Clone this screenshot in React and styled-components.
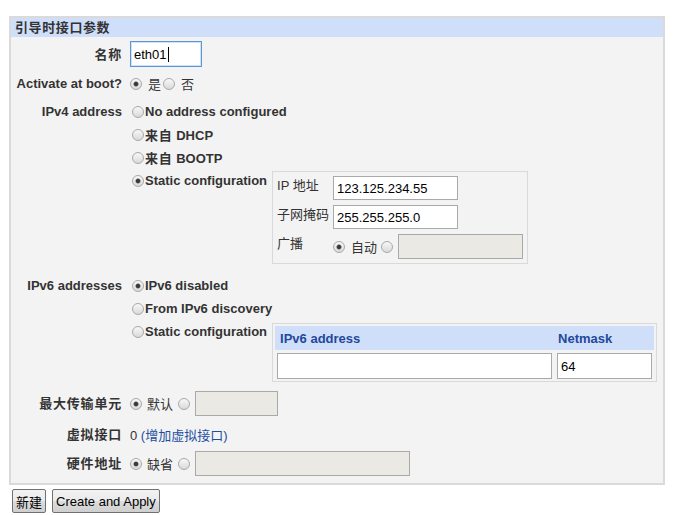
import React from 'react'
import styled, { createGlobalStyle } from 'styled-components'

const Global = createGlobalStyle`
  body {
    margin: 0;
    background: #fff;
    font-family: "Liberation Sans", Arial, "Noto Sans CJK SC", sans-serif;
    font-size: 13px;
    color: #333;
  }
  * { box-sizing: border-box; }
`

const Page = styled.div`
  padding: 16px 0 0 9px;
`

const Box = styled.div`
  width: 656px;
  border: 2px solid #dadada;
  background: #f3f3f3;
`

const Title = styled.div`
  height: 19px;
  line-height: 19px;
  padding-left: 4px;
  background: #cfdffa;
  font-weight: bold;
  letter-spacing: 0.6px;
  color: #333;
`

const Form = styled.div`
  display: grid;
  grid-template-columns: 111px 1fr;
  column-gap: 8px;
  row-gap: 5px;
  padding: 4px 0 7px 0;
`

const Label = styled.div`
  text-align: right;
  font-weight: bold;
  line-height: 23px;
  align-self: ${p => (p.$top ? 'start' : 'center')};
  letter-spacing: ${p => (p.$zh ? '0.8px' : '0')};
  white-space: nowrap;
`

const Value = styled.div`
  display: flex;
  flex-direction: ${p => (p.$column ? 'column' : 'row')};
  align-items: ${p => (p.$column ? 'flex-start' : 'center')};
  min-height: ${p => p.$h || 23}px;
`

const Line = styled.div`
  display: flex;
  align-items: center;
  height: 23px;
`

const Option = styled.div`
  display: flex;
  align-items: flex-start;
`

const Radio = styled.span`
  display: inline-block;
  flex: none;
  width: 12px;
  height: 12px;
  border-radius: 50%;
  border: 1px solid #a9a9a9;
  margin: 0 ${p => p.$gap ?? 1}px 0 ${p => p.$left ?? 0}px;
  background: ${p =>
    p.$on
      ? 'radial-gradient(circle, #3a3a3a 0 1.8px, #9a9a9a 2.4px, transparent 3px), linear-gradient(#f8f8f8, #d9d9d9)'
      : 'linear-gradient(#f8f8f8, #d9d9d9)'};
`

const OptText = styled.span`
  font-weight: bold;
  white-space: nowrap;
`

const Zh = styled.span`
  letter-spacing: 0.8px;
`

const Plain = styled.span`
  margin-right: ${p => p.$gap ?? 4}px;
  white-space: nowrap;
`

const NameField = styled.div`
  display: flex;
  align-items: center;
  width: 72px;
  height: 26px;
  padding-left: 3px;
  background: #fff;
  border: 1px solid #5a96d8;
  box-shadow: inset 0 0 0 1px #cfe2f7;
  color: #000;
`

const Caret = styled.span`
  width: 1px;
  height: 15px;
  background: #000;
  margin-left: 1px;
`

const Field = styled.input`
  width: ${p => p.$w}px;
  height: ${p => p.$h || 24}px;
  margin: 0;
  padding: 0 3px;
  border: 1px solid #a9a9a9;
  background: ${p => (p.disabled ? '#ebe9e3' : '#fff')};
  font: 13px "Liberation Sans", Arial, sans-serif;
  color: #000;
  outline: none;
`

const SubBox = styled.div`
  display: grid;
  grid-template-columns: 56px auto;
  row-gap: 5px;
  margin: 2px 0 5px 5px;
  padding: 4px;
  border: 1px solid #d9d9d9;
`

const SubLabel = styled.div`
  line-height: 18px;
  padding-top: 1px;
  white-space: nowrap;
`

const SubValue = styled.div`
  display: flex;
  align-items: center;
`

const V6Box = styled.div`
  margin: 3px 0 2px 5px;
  padding: 2px;
  border: 1px solid #d9d9d9;
`

const V6Head = styled.div`
  display: grid;
  grid-template-columns: 280px 98px;
  height: 24px;
  align-items: center;
  background: #cfdffa;
  color: #24489a;
  font-weight: bold;
`

const HeadCell = styled.div`
  padding-left: ${p => p.$pl}px;
`

const V6Row = styled.div`
  display: flex;
  gap: 5px;
  padding: 3px 2px 0;
`

const Link = styled.a`
  color: #1d4f9f;
  text-decoration: none;
`

const Buttons = styled.div`
  display: flex;
  gap: 6px;
  margin: 4px 0 0 3px;
`

const Button = styled.button`
  height: 24px;
  padding: 0 3px;
  border: 1px solid #707070;
  border-radius: 2px;
  background: linear-gradient(#f2f2f2, #ebebeb 50%, #dddddd 51%, #cfcfcf);
  font: 13px "Liberation Sans", Arial, "Noto Sans CJK SC", sans-serif;
  color: #000;
`

export default function App() {
  return (
    <Page>
      <Global />
      <Box>
        <Title>引导时接口参数</Title>
        <Form>
          <Label $zh>名称</Label>
          <Value $h={26}>
            <NameField>eth01<Caret /></NameField>
          </Value>

          <Label $top>Activate at boot?</Label>
          <Value>
            <Radio $on $gap={6} />
            <Plain $gap={2}>是</Plain>
            <Radio $gap={6} />
            <Plain>否</Plain>
          </Value>

          <Label $top>IPv4 address</Label>
          <Value $column>
            <Line><Radio $left={2} /><OptText>No address configured</OptText></Line>
            <Line><Radio $left={2} /><OptText><Zh>来自</Zh> DHCP</OptText></Line>
            <Line><Radio $left={2} /><OptText><Zh>来自</Zh> BOOTP</OptText></Line>
            <Option>
              <Line><Radio $left={2} $on /><OptText>Static configuration</OptText></Line>
              <SubBox>
                <SubLabel>IP 地址</SubLabel>
                <SubValue><Field $w={125} defaultValue="123.125.234.55" /></SubValue>
                <SubLabel>子网掩码</SubLabel>
                <SubValue><Field $w={125} defaultValue="255.255.255.0" /></SubValue>
                <SubLabel>广播</SubLabel>
                <SubValue>
                  <Radio $on $gap={6} />
                  <Plain>自动</Plain>
                  <Radio $gap={5} />
                  <Field $w={125} $h={25} disabled />
                </SubValue>
              </SubBox>
            </Option>
          </Value>

          <Label $top>IPv6 addresses</Label>
          <Value $column>
            <Line><Radio $left={2} $on /><OptText>IPv6 disabled</OptText></Line>
            <Line><Radio $left={2} /><OptText>From IPv6 discovery</OptText></Line>
            <Option>
              <Line><Radio $left={2} /><OptText>Static configuration</OptText></Line>
              <V6Box>
                <V6Head>
                  <HeadCell $pl={5}>IPv6 address</HeadCell>
                  <HeadCell $pl={3}>Netmask</HeadCell>
                </V6Head>
                <V6Row>
                  <Field $w={275} $h={26} />
                  <Field $w={95} $h={26} defaultValue="64" />
                </V6Row>
              </V6Box>
            </Option>
          </Value>

          <Label $zh>最大传输单元</Label>
          <Value $h={29}>
            <Radio $on $gap={5} />
            <Plain $gap={5}>默认</Plain>
            <Radio $gap={5} />
            <Field $w={83} $h={25} disabled />
          </Value>

          <Label $top $zh>虚拟接口</Label>
          <Value>
            <Plain>0 <Link href="#">(增加虚拟接口)</Link></Plain>
          </Value>

          <Label $zh>硬件地址</Label>
          <Value $h={25}>
            <Radio $on $gap={5} />
            <Plain $gap={5}>缺省</Plain>
            <Radio $gap={5} />
            <Field $w={215} $h={25} disabled />
          </Value>
        </Form>
      </Box>
      <Buttons>
        <Button>新建</Button>
        <Button>Create and Apply</Button>
      </Buttons>
    </Page>
  )
}
